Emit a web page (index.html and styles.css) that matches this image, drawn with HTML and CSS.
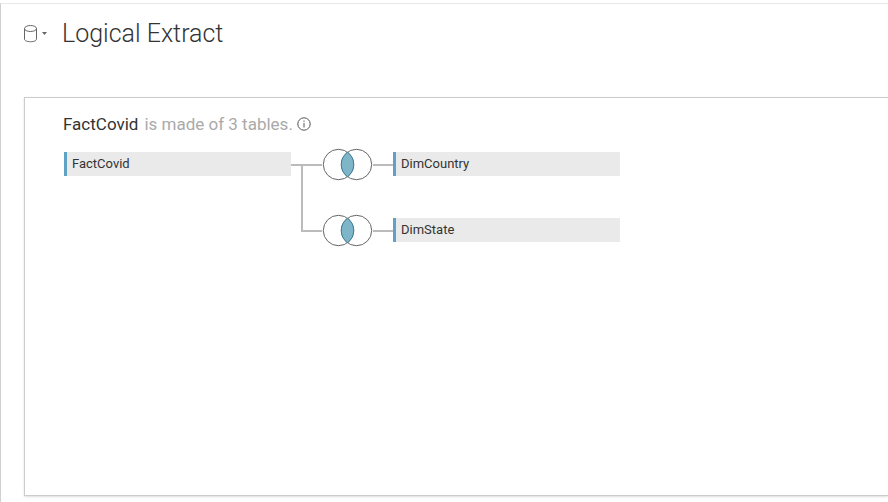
FILE: index.html
```html
<!DOCTYPE html>
<html lang="en">
<head>
<meta charset="utf-8">
<title>Logical Extract</title>
<link rel="stylesheet" href="styles.css">
</head>
<body>
<main class="workspace">
  <header class="header">
    <button class="source-button" type="button" aria-label="Data source menu">
      <svg width="24" height="18" viewBox="0 0 24 18" fill="none" stroke="#666">
        <ellipse cx="6.5" cy="3.5" rx="6" ry="3"/>
        <path d="M.5 3.5V14C.5 15.8 3.2 16.7 6.5 16.7S12.500 15.800 12.500 14V3.500"/>
        <path d="M18 7h5l-2.500 3z" fill="#666" stroke="none"/>
      </svg>
    </button>
    <h1 class="title">Logical Extract</h1>
  </header>
  <section class="canvas">
    <div class="summary">
      <h2 class="summary-name">FactCovid</h2>
      <p class="summary-text">is made of 3 tables.</p>
      <button class="info-button" type="button" aria-label="Information">
        <svg width="14" height="14" viewBox="0 0 14 14" fill="none" stroke="#555">
          <circle cx="7" cy="7" r="6.200"/>
          <path d="M7 6v4.500M7 3.500v1.300"/>
        </svg>
      </button>
    </div>
    <div class="joins">
      <div class="table-node">FactCovid</div>
      <svg class="connectors" width="102" height="90" viewBox="0 0 102 90" fill="none" aria-hidden="true">
        <defs>
          <g id="join">
            <circle cx="47.500" cy="12.500" r="15.200" fill="#fff" stroke="#666"/>
            <circle cx="65.500" cy="12.500" r="15.200" stroke="#666"/>
            <path d="M56.500 .2a15.200 15.200 0 0 1 0 24.600a15.200 15.200 0 0 1 0-24.600z" fill="#7fb5c9" stroke="#3d7f9a"/>
          </g>
        </defs>
        <path d="M0 13h31M82 13h20M11 13v66h20M82 79h20" stroke="#bbb" stroke-width="2"/>
        <use href="#join"/>
        <use href="#join" y="66"/>
      </svg>
      <div class="table-node">DimCountry</div>
      <div class="table-node table-node-last">DimState</div>
    </div>
  </section>
</main>
</body>
</html>
```
FILE: styles.css
```css
* {
  box-sizing: border-box;
}

body {
  margin: 0;
  padding-top: 3px;
  background: #fff;
  color: #333;
  font-family: Roboto, "Liberation Sans", sans-serif;
}

.workspace {
  display: flex;
  flex-direction: column;
  min-height: calc(100vh - 3px);
  padding: 14px 0 6px 23px;
  border-top: 1px solid #e8e8e8;
  border-left: 1px solid #d0d0d0;
}

.header {
  display: flex;
  align-items: center;
  gap: 14px;
  height: 32px;
  margin-bottom: 47px;
}

.source-button,
.info-button {
  display: flex;
  padding: 0;
  border: 0;
  background: none;
}

.title {
  margin: 0;
  font-size: 25px;
  line-height: 32px;
  font-weight: 300;
}

.canvas {
  flex: 1;
  padding: 16px 0 24px 38px;
  border: 1px solid #ccc;
  border-right: 0;
  box-shadow: 0 1px 2px #ddd;
}

.summary {
  display: flex;
  align-items: center;
  margin-bottom: 18px;
  font-size: 17px;
  line-height: 20px;
}

.summary-name,
.summary-text {
  margin: 0;
  font-size: inherit;
  font-weight: 400;
}

.summary-name {
  margin-right: 6px;
}

.summary-text {
  margin-right: 4px;
  color: #aaa;
}

.joins {
  display: grid;
  grid-template-columns: 227px 102px 227px;
  grid-template-rows: 24px 24px;
  row-gap: 42px;
  margin-left: 1px;
}

.connectors {
  grid-row: span 2;
  overflow: visible;
}

.table-node {
  padding-left: 5px;
  border-left: 3px solid #5fa2c4;
  background: #eaeaea;
  font-size: 13px;
  line-height: 24px;
}

.table-node-last {
  grid-column: 3;
}
```
